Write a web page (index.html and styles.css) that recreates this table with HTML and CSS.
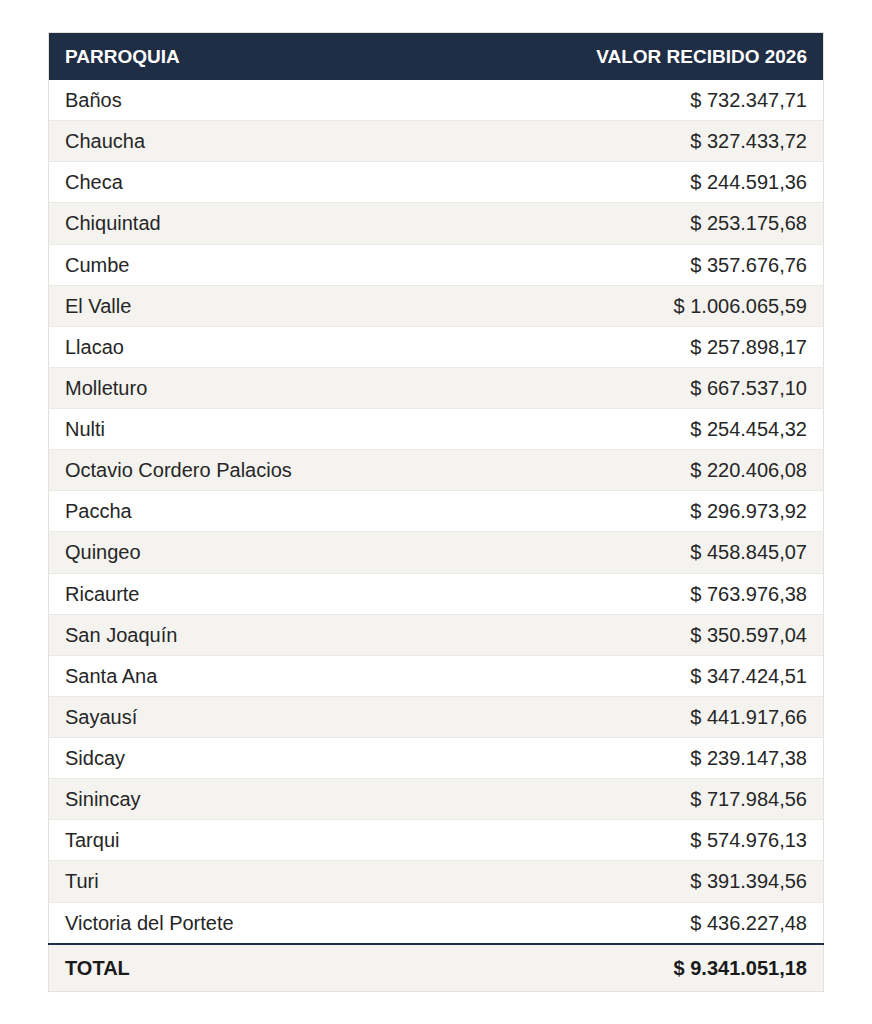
FILE: index.html
```html
<!DOCTYPE html>
<html lang="es">
<head>
<meta charset="utf-8">
<title>Parroquias</title>
<link rel="stylesheet" href="styles.css">
</head>
<body>
<main class="page">
<table class="tabla">
<thead>
<tr><th class="col-name">PARROQUIA</th><th class="col-val">VALOR RECIBIDO 2026</th></tr>
</thead>
<tbody>
<tr><td>Baños</td><td class="val">$ 732.347,71</td></tr>
<tr><td>Chaucha</td><td class="val">$ 327.433,72</td></tr>
<tr><td>Checa</td><td class="val">$ 244.591,36</td></tr>
<tr><td>Chiquintad</td><td class="val">$ 253.175,68</td></tr>
<tr><td>Cumbe</td><td class="val">$ 357.676,76</td></tr>
<tr><td>El Valle</td><td class="val">$ 1.006.065,59</td></tr>
<tr><td>Llacao</td><td class="val">$ 257.898,17</td></tr>
<tr><td>Molleturo</td><td class="val">$ 667.537,10</td></tr>
<tr><td>Nulti</td><td class="val">$ 254.454,32</td></tr>
<tr><td>Octavio Cordero Palacios</td><td class="val">$ 220.406,08</td></tr>
<tr><td>Paccha</td><td class="val">$ 296.973,92</td></tr>
<tr><td>Quingeo</td><td class="val">$ 458.845,07</td></tr>
<tr><td>Ricaurte</td><td class="val">$ 763.976,38</td></tr>
<tr><td>San Joaquín</td><td class="val">$ 350.597,04</td></tr>
<tr><td>Santa Ana</td><td class="val">$ 347.424,51</td></tr>
<tr><td>Sayausí</td><td class="val">$ 441.917,66</td></tr>
<tr><td>Sidcay</td><td class="val">$ 239.147,38</td></tr>
<tr><td>Sinincay</td><td class="val">$ 717.984,56</td></tr>
<tr><td>Tarqui</td><td class="val">$ 574.976,13</td></tr>
<tr><td>Turi</td><td class="val">$ 391.394,56</td></tr>
<tr><td>Victoria del Portete</td><td class="val">$ 436.227,48</td></tr>
</tbody>
<tfoot>
<tr><td>TOTAL</td><td class="val">$ 9.341.051,18</td></tr>
</tfoot>
</table>
</main>
</body>
</html>
```
FILE: styles.css
```css
html, body {
  margin: 0;
  padding: 0;
  background: #ffffff;
}
body {
  font-family: "Liberation Sans", Arial, sans-serif;
  color: #262626;
}
.page {
  padding: 32px 48px;
}
.tabla {
  width: 100%;
  border-collapse: collapse;
  border: 1px solid #e3e1dd;
  font-size: 20px;
}
.tabla th {
  background: #1f2d45;
  color: #ffffff;
  font-weight: bold;
  font-size: 19px;
  text-align: left;
  padding: 0 16px;
  height: 47px;
  line-height: 22px;
}
.tabla th.col-val {
  text-align: right;
}
.tabla td {
  padding: 0 16px;
  height: 40.14px;
  line-height: 22px;
  border-bottom: 1px solid #ebe9e5;
}
.tabla td.val {
  text-align: right;
}
.tabla tbody tr:nth-child(even) td {
  background: #f5f3f0;
}
.tabla tbody tr:last-child td {
  border-bottom: none;
}
.tabla tfoot td {
  background: #f5f3f0;
  font-weight: bold;
  color: #1a1a1a;
  height: 46px;
  border-top: 2px solid #1f2d45;
  border-bottom: 1px solid #e3e1dd;
}
```
